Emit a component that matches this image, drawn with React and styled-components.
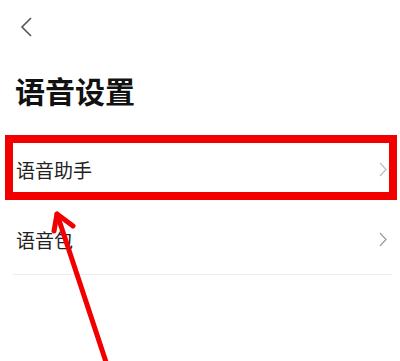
import React from 'react';
import styled, { createGlobalStyle } from 'styled-components';

const GlobalStyle = createGlobalStyle`
  html, body {
    margin: 0;
    padding: 0;
    background: #ffffff;
  }
  body {
    font-family: "Noto Sans CJK SC", "Noto Sans", sans-serif;
  }
`;

const Page = styled.div`
  position: relative;
  width: 400px;
  height: 361px;
  overflow: hidden;
  background: #ffffff;
`;

const Header = styled.div`
  display: flex;
  align-items: center;
  padding: 17px 0 0 20px;
  height: 20px;
`;

const Title = styled.h1`
  margin: 33px 0 0 15px;
  font-size: 30px;
  line-height: 40px;
  font-weight: 700;
  color: #111;
`;

const List = styled.div`
  display: flex;
  flex-direction: column;
  margin-top: 25px;
`;

const Row = styled.div`
  display: flex;
  align-items: center;
  justify-content: space-between;
  height: 70px;
  margin: 0 8px 0 13px;
  padding: 0 5px 0 3px;
  box-sizing: border-box;
  border-bottom: 1px solid ${(p) => (p.$divider ? '#ececec' : 'transparent')};
`;

const RowText = styled.span`
  font-size: 19px;
  line-height: 24px;
  color: #222;
`;

const Chevron = styled.svg`
  width: 8px;
  height: 15px;
`;

const Highlight = styled.div`
  position: absolute;
  left: 5px;
  top: 135px;
  width: 392px;
  height: 65px;
  box-sizing: border-box;
  border: 8px solid #f20000;
  pointer-events: none;
`;

const ArrowLayer = styled.svg`
  position: absolute;
  left: 0;
  top: 0;
  width: 400px;
  height: 361px;
  pointer-events: none;
`;

const BackIcon = () => (
  <svg width="12" height="20" viewBox="0 0 12 20">
    <path d="M11 1 L2 10 L11 19" fill="none" stroke="#555" strokeWidth="1.6" />
  </svg>
);

const RightChevron = ({ color }) => (
  <Chevron viewBox="0 0 8 15">
    <path d="M1 1 L7 7.5 L1 14" fill="none" stroke={color} strokeWidth="1.2" />
  </Chevron>
);

const items = [
  { label: '语音助手', chevron: '#bdbdbd', divider: false },
  { label: '语音包', chevron: '#9a9a9a', divider: true },
];

export default function App() {
  return (
    <>
      <GlobalStyle />
      <Page>
        <Header>
          <BackIcon />
        </Header>
        <Title>语音设置</Title>
        <List>
          {items.map((item) => (
            <Row key={item.label} $divider={item.divider}>
              <RowText>{item.label}</RowText>
              <RightChevron color={item.chevron} />
            </Row>
          ))}
        </List>
        <Highlight />
        <ArrowLayer viewBox="0 0 400 361">
          <g stroke="#f20000" strokeWidth="5" strokeLinecap="round" fill="none">
            <line x1="57" y1="214" x2="107" y2="365" />
            <path d="M54 231 L57 214 L73 226" strokeLinejoin="round" />
          </g>
        </ArrowLayer>
      </Page>
    </>
  );
}
